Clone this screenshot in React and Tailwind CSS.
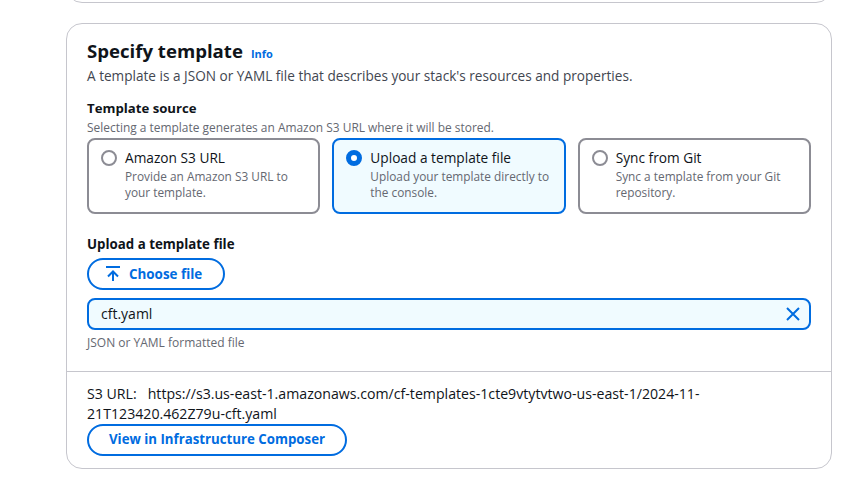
const sources = [
  { title: "Amazon S3 URL", desc: "Provide an Amazon S3 URL to your template.", checked: false },
  { title: "Upload a template file", desc: "Upload your template directly to the console.", checked: true },
  { title: "Sync from Git", desc: "Sync a template from your Git repository.", checked: false },
];

function SourceCard({ title, desc, checked }) {
  return (
    <div
      className={`flex gap-2 rounded-lg border-2 pl-[12px] pr-3 pt-[8px] h-[76px] ${
        checked ? "border-[#006ce0] bg-[#f0fbff]" : "border-[#8c8c94] bg-white"
      }`}
    >
      {checked ? (
        <span className="mt-[2px] h-4 w-4 shrink-0 rounded-full border-[5px] border-[#006ce0] bg-white" />
      ) : (
        <span className="mt-[2px] h-4 w-4 shrink-0 rounded-full border-2 border-[#8c8c94] bg-white" />
      )}
      <div>
        <div className="text-[13.7px] leading-[20px] text-[#0f141a]">{title}</div>
        <div className="text-[11.85px] leading-4 text-[#656871]">{desc}</div>
      </div>
    </div>
  );
}

export default function App() {
  return (
    <div className="h-[485px] w-[850px] overflow-hidden bg-white font-['Open_Sans','Noto_Sans',sans-serif]">
      <div className="ml-[66px] w-[766px]">
        <div className="-mt-5 h-[23px] rounded-b-2xl border border-[#c6c6cd]" />

        <section className="mt-5 h-[446px] rounded-2xl border border-[#c6c6cd]">
          <div className="px-5 pt-[13px]">
            <div className="flex items-baseline gap-2">
              <h2 className="text-[18.6px] font-bold leading-7 text-[#0f141a]">Specify template</h2>
              <a className="text-[11px] font-bold text-[#006ce0]">Info</a>
            </div>
            <p className="mt-[1px] text-[13.6px] leading-5 text-[#424650]">
              A template is a JSON or YAML file that describes your stack's resources and properties.
            </p>

            <div className="mt-[12px] text-[13.2px] font-bold leading-5 text-[#0f141a]">Template source</div>
            <div className="mt-[1px] text-[11.93px] leading-4 text-[#656871]">
              Selecting a template generates an Amazon S3 URL where it will be stored.
            </div>

            <div className="mt-[3px] grid grid-cols-3 gap-3">
              {sources.map((s) => (
                <SourceCard key={s.title} {...s} />
              ))}
            </div>

            <div className="mt-5 text-[13.3px] font-bold leading-5 text-[#0f141a]">Upload a template file</div>
            <button className="mt-1 flex h-8 w-[138px] items-center gap-2 rounded-full border-2 border-[#006ce0] pl-4 text-[13.4px] font-bold text-[#006ce0]">
              <svg width="16" height="16" viewBox="0 0 16 16" fill="none" stroke="currentColor" strokeWidth="2">
                <path d="M1 1h14M8 15V6M3 10.5l5-5 5 5" />
              </svg>
              Choose file
            </button>
            <div className="mt-2 flex h-8 items-center justify-between rounded-lg border-2 border-[#006ce0] bg-[#f0fbff] pl-3 pr-2 text-sm text-[#0f141a]">
              cft.yaml
              <svg width="16" height="16" viewBox="0 0 16 16" fill="none" stroke="#006ce0" strokeWidth="2">
                <path d="M2 2l12 12M14 2 2 14" />
              </svg>
            </div>
            <div className="mt-[5px] text-xs leading-4 text-[#656871]">JSON or YAML formatted file</div>
          </div>

          <div className="mt-[20px] border-t border-[#c6c6cd] px-5 pt-[12px]">
            <p className="w-[640px] text-[14.15px] leading-5 text-[#0f141a]">
              <span className="whitespace-pre">S3 URL:   </span>
              https://s3.us-east-1.amazonaws.com/cf-templates-1cte9vtytvtwo-us-east-1/2024-11-21T123420.462Z79u-cft.yaml
            </p>
            <button className="flex h-8 w-[260px] items-center justify-center rounded-full border-2 border-[#006ce0] text-[13.25px] font-bold text-[#006ce0]">
              View in Infrastructure Composer
            </button>
          </div>
        </section>
      </div>
    </div>
  );
}
